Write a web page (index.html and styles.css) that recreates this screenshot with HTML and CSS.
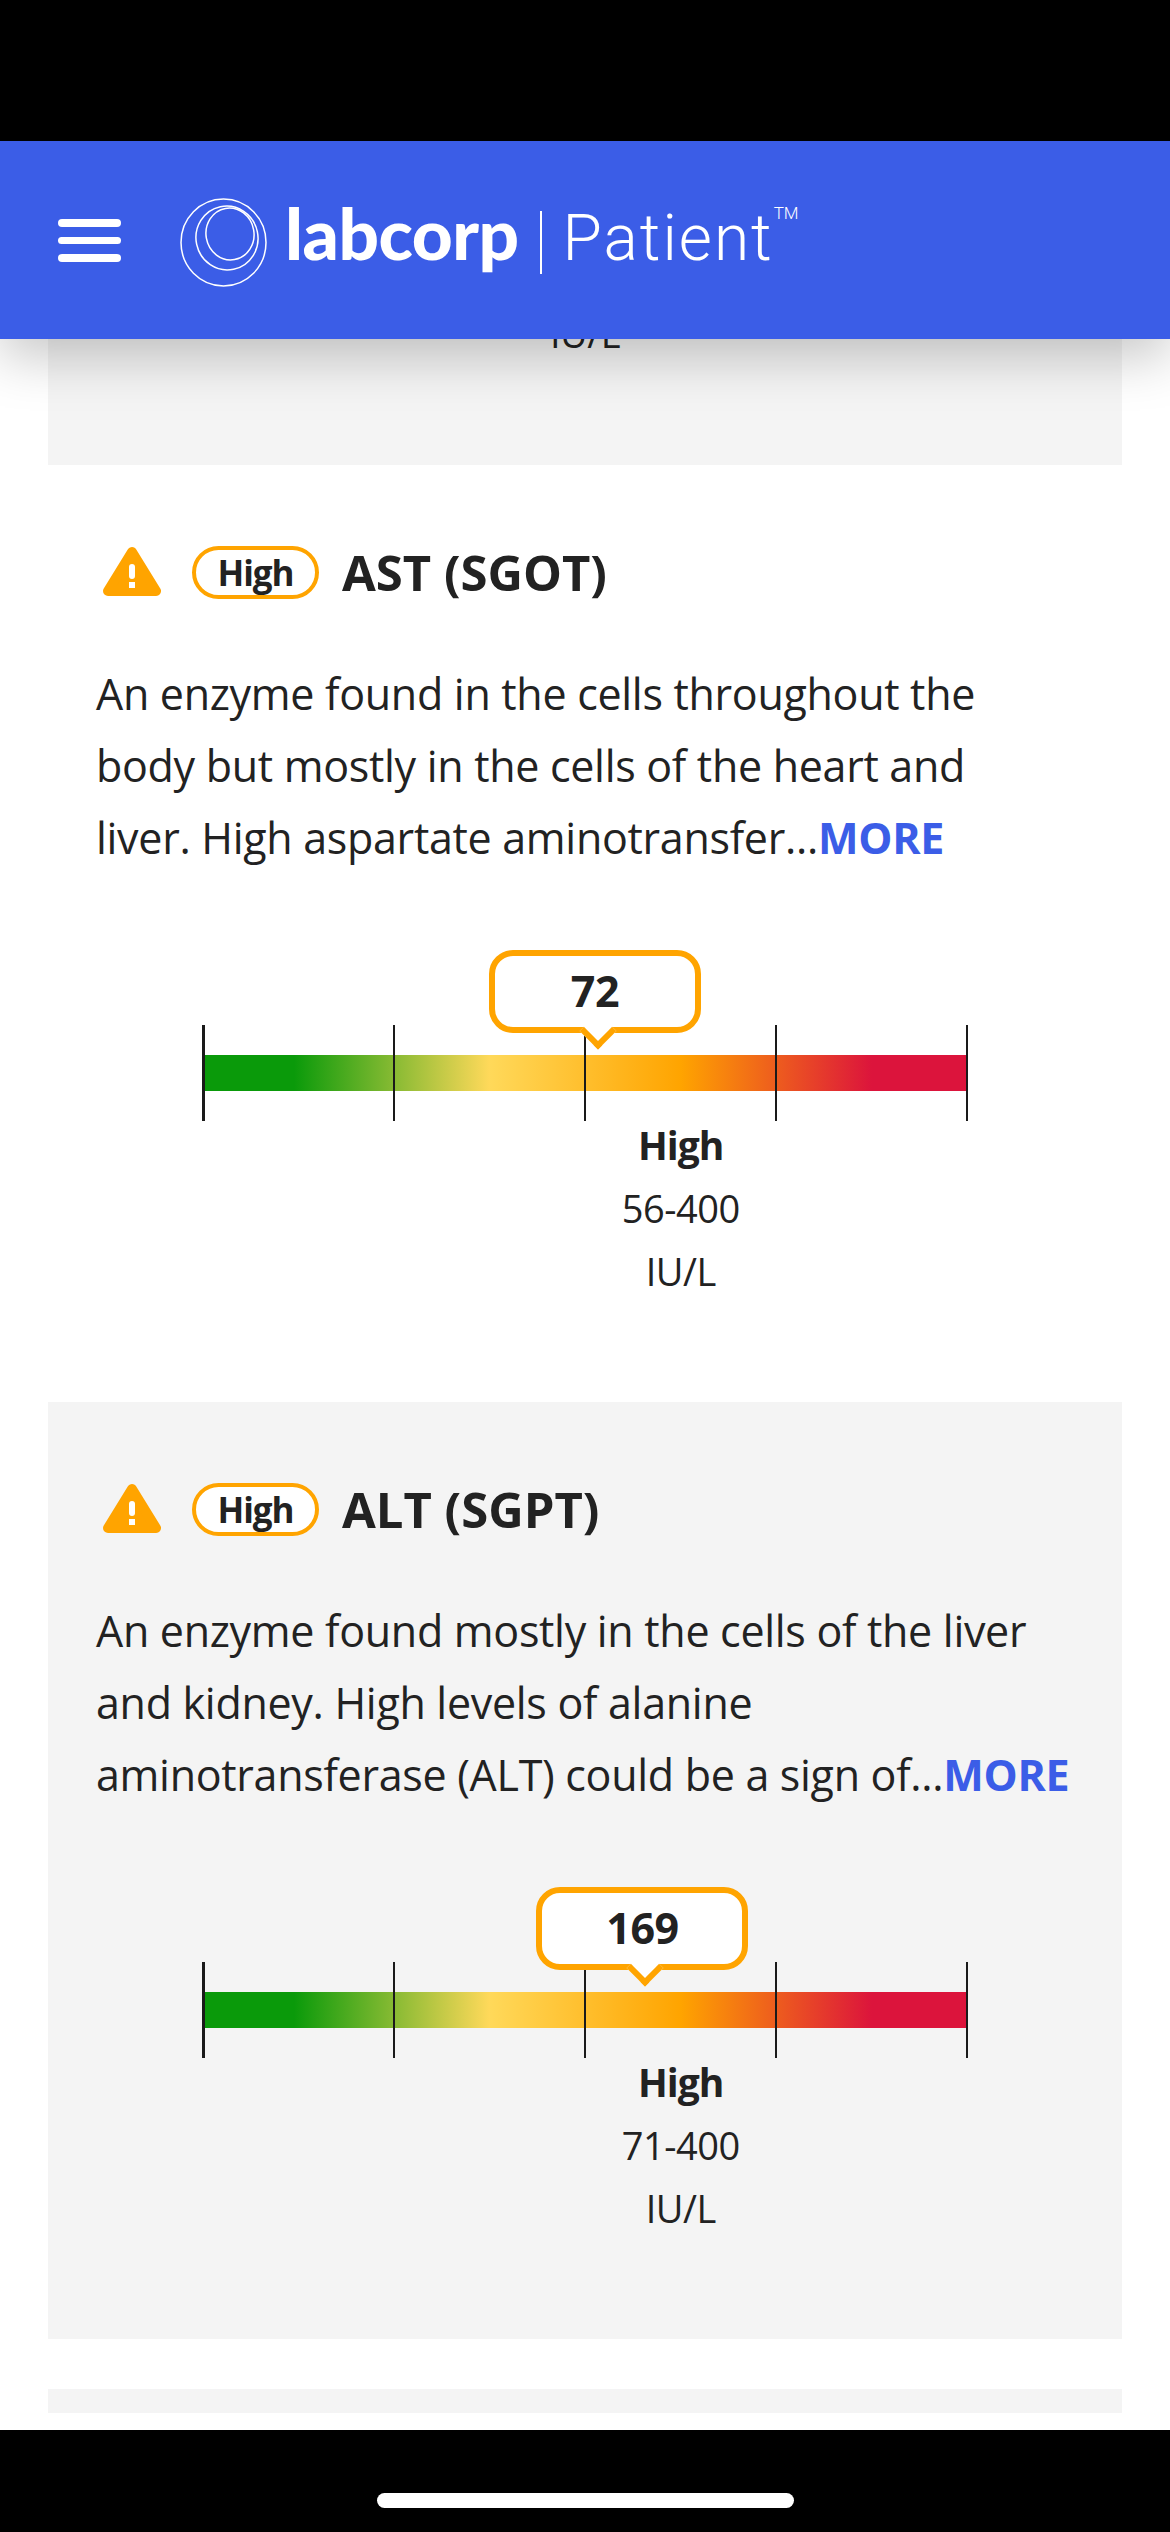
FILE: index.html
```html
<!DOCTYPE html>
<html lang="en">
<head>
    <meta charset="UTF-8">
    <meta name="viewport" content="width=device-width, initial-scale=1.0">
    <title>Labcorp Patient</title>
    <link rel="stylesheet" href="styles.css">
</head>
<body>
<div class="screen">
    <div class="status-bar"></div>

    <header class="app-header">
        <div class="menu-btn"><span></span><span></span><span></span></div>
        <svg class="logo-mark" viewBox="0 0 87 89" fill="none" stroke="#fff" stroke-width="1.5">
            <ellipse cx="43.5" cy="44.5" rx="42.5" ry="43.5"/>
            <ellipse cx="47" cy="40" rx="31" ry="32" transform="rotate(-12 47 40)"/>
            <ellipse cx="50" cy="36" rx="24" ry="26" transform="rotate(-10 50 36)"/>
        </svg>
        <span class="logo-word">labcorp</span>
        <span class="logo-divider"></span>
        <span class="logo-patient">Patient</span>
        <span class="logo-tm">TM</span>
    </header>

    <main class="results">
        <section class="card card-gray card-stub">
            <div class="stub-unit">IU/L</div>
        </section>

        <section class="card">
            <div class="card-head">
                <svg class="warn-icon" viewBox="0 0 58 51">
                    <path d="M29 6 L53 45 H5 Z" fill="#ffa400" stroke="#ffa400" stroke-width="10" stroke-linejoin="round"/>
                    <rect x="26" y="18" width="6" height="15" rx="3" fill="#fff"/>
                    <rect x="26" y="36" width="6" height="6" fill="#fff"/>
                </svg>
                <span class="pill">High</span>
                <h2 class="test-name">AST (SGOT)</h2>
            </div>
            <p class="desc">An enzyme found in the cells throughout the<br>body but mostly in the cells of the heart and<br>liver. High aspartate aminotransfer...<a class="more">MORE</a></p>
            <div class="scale">
                <div class="bar"></div>
                <div class="ticks"><i></i><i></i><i></i><i></i><i></i></div>
                <div class="bubble" style="left: 51.3%">72</div>
            </div>
            <div class="range-row">
                <div class="range">
                    <strong>High</strong>
                    <span>56-400</span>
                    <span>IU/L</span>
                </div>
            </div>
        </section>

        <section class="card card-gray">
            <div class="card-head">
                <svg class="warn-icon" viewBox="0 0 58 51">
                    <path d="M29 6 L53 45 H5 Z" fill="#ffa400" stroke="#ffa400" stroke-width="10" stroke-linejoin="round"/>
                    <rect x="26" y="18" width="6" height="15" rx="3" fill="#fff"/>
                    <rect x="26" y="36" width="6" height="6" fill="#fff"/>
                </svg>
                <span class="pill">High</span>
                <h2 class="test-name">ALT (SGPT)</h2>
            </div>
            <p class="desc">An enzyme found mostly in the cells of the liver<br>and kidney. High levels of alanine<br>aminotransferase (ALT) could be a sign of...<a class="more">MORE</a></p>
            <div class="scale">
                <div class="bar"></div>
                <div class="ticks"><i></i><i></i><i></i><i></i><i></i></div>
                <div class="bubble" style="left: 57.5%">169</div>
            </div>
            <div class="range-row">
                <div class="range">
                    <strong>High</strong>
                    <span>71-400</span>
                    <span>IU/L</span>
                </div>
            </div>
        </section>

        <section class="card card-gray card-next"></section>
    </main>

    <div class="home-bar"><span></span></div>
</div>
</body>
</html>
```

FILE: styles.css
```css
* {
    box-sizing: border-box;
}
body {
    margin: 0;
    font-family: "Open Sans", "Noto Sans", sans-serif;
    color: #222;
    background-color: #fff;
}
.screen {
    width: 1170px;
    height: 2532px;
    display: flex;
    flex-direction: column;
    overflow: hidden;
}
.status-bar {
    height: 141px;
    background-color: #000;
}
.app-header {
    height: 198px;
    display: flex;
    align-items: flex-start;
    background-color: #3b5de7;
    color: #fff;
    position: relative;
    z-index: 5;
    box-shadow: 0 18px 50px rgba(0, 0, 0, 0.22);
}
.menu-btn {
    width: 63px;
    margin: 78px 0 0 58px;
    display: flex;
    flex-direction: column;
    gap: 10px;
}
.menu-btn span {
    height: 7.5px;
    border-radius: 4px;
    background-color: #fff;
}
.logo-mark {
    width: 87px;
    height: 89px;
    margin: 57px 0 0 59px;
}
.logo-word {
    margin: 52px 0 0 18px;
    font-family: Lato, sans-serif;
    font-weight: 900;
    font-size: 71px;
    line-height: 80px;
    letter-spacing: -0.5px;
}
.logo-divider {
    width: 2px;
    height: 63px;
    margin: 70px 0 0 22px;
    background-color: #fff;
}
.logo-patient {
    margin: 58px 0 0 20px;
    font-family: Roboto, sans-serif;
    font-weight: 300;
    font-size: 64px;
    line-height: 80px;
    letter-spacing: 2px;
}
.logo-tm {
    margin: 62px 0 0 0;
    font-family: Roboto, sans-serif;
    font-weight: 300;
    font-size: 17px;
    line-height: 20px;
}
.results {
    flex: 1;
    min-height: 0;
    overflow: hidden;
    display: flex;
    flex-direction: column;
}
.card {
    flex: none;
    margin: 0 48px;
    padding: 81px 48px 106px;
}
.card-gray {
    background-color: #f4f4f4;
}
.card-stub {
    margin-top: -31px;
    margin-bottom: 0;
    height: 157px;
    padding: 0;
    text-align: center;
}
.stub-unit {
    font-size: 38px;
    line-height: 50px;
    letter-spacing: -0.5px;
}
.card-next {
    height: 24px;
    padding: 0;
    margin-top: 50px;
}
.card-head {
    display: flex;
    align-items: center;
    height: 53px;
}
.warn-icon {
    width: 58px;
    height: 51px;
    margin: -2px 31px 0 7px;
}
.pill {
    width: 127px;
    height: 53px;
    margin-right: 23px;
    border: 4px solid #ffa400;
    border-radius: 27px;
    display: flex;
    align-items: center;
    justify-content: center;
    font-weight: 700;
    font-size: 35px;
    letter-spacing: -1px;
    background-color: #fff;
}
.test-name {
    margin: 0;
    font-size: 49px;
    font-weight: 700;
    letter-spacing: 0;
    line-height: 53px;
}
.desc {
    margin: 59px 0 0 0;
    font-size: 43px;
    line-height: 72px;
    letter-spacing: -0.3px;
    white-space: nowrap;
}
.more {
    color: #3b5de7;
    font-weight: 700;
}
.scale {
    position: relative;
    height: 96px;
    margin: 151px 106px 0;
    padding-top: 30px;
}
.bar {
    height: 36px;
    background: linear-gradient(to right, #0a9a0a 12%, #ffd95a 37.5%, #ffa400 62.5%, #dc143c 87.5%);
}
.ticks {
    position: absolute;
    top: 0;
    left: 0;
    right: 0;
    bottom: 0;
    display: flex;
    justify-content: space-between;
}
.ticks i {
    width: 2.5px;
    background-color: #1a1a1a;
}
.bubble {
    position: absolute;
    top: -75px;
    width: 212px;
    height: 83px;
    padding-bottom: 2px;
    transform: translateX(-50%);
    border: 6px solid #ffa400;
    border-radius: 24px;
    background-color: #fff;
    display: flex;
    align-items: center;
    justify-content: center;
    font-weight: 700;
    font-size: 43px;
    letter-spacing: -0.5px;
}
.bubble::after {
    content: "";
    position: absolute;
    left: 50%;
    bottom: -17px;
    width: 20px;
    height: 20px;
    margin-left: -10px;
    transform: rotate(45deg);
    background-color: #fff;
    border-right: 6px solid #ffa400;
    border-bottom: 6px solid #ffa400;
}
.range-row {
    margin: -1px 106px 0;
    display: grid;
    grid-template-columns: repeat(4, 1fr);
}
.range {
    grid-column: 3;
    display: flex;
    flex-direction: column;
    gap: 13px;
    align-items: center;
    font-size: 38px;
    line-height: 50px;
    letter-spacing: -0.5px;
}
.range strong {
    font-size: 39px;
    letter-spacing: -1px;
}
.home-bar {
    height: 102px;
    padding-top: 63px;
    background-color: #000;
}
.home-bar span {
    display: block;
    width: 417px;
    height: 15px;
    margin-left: 377px;
    border-radius: 8px;
    background-color: #fff;
}
```
